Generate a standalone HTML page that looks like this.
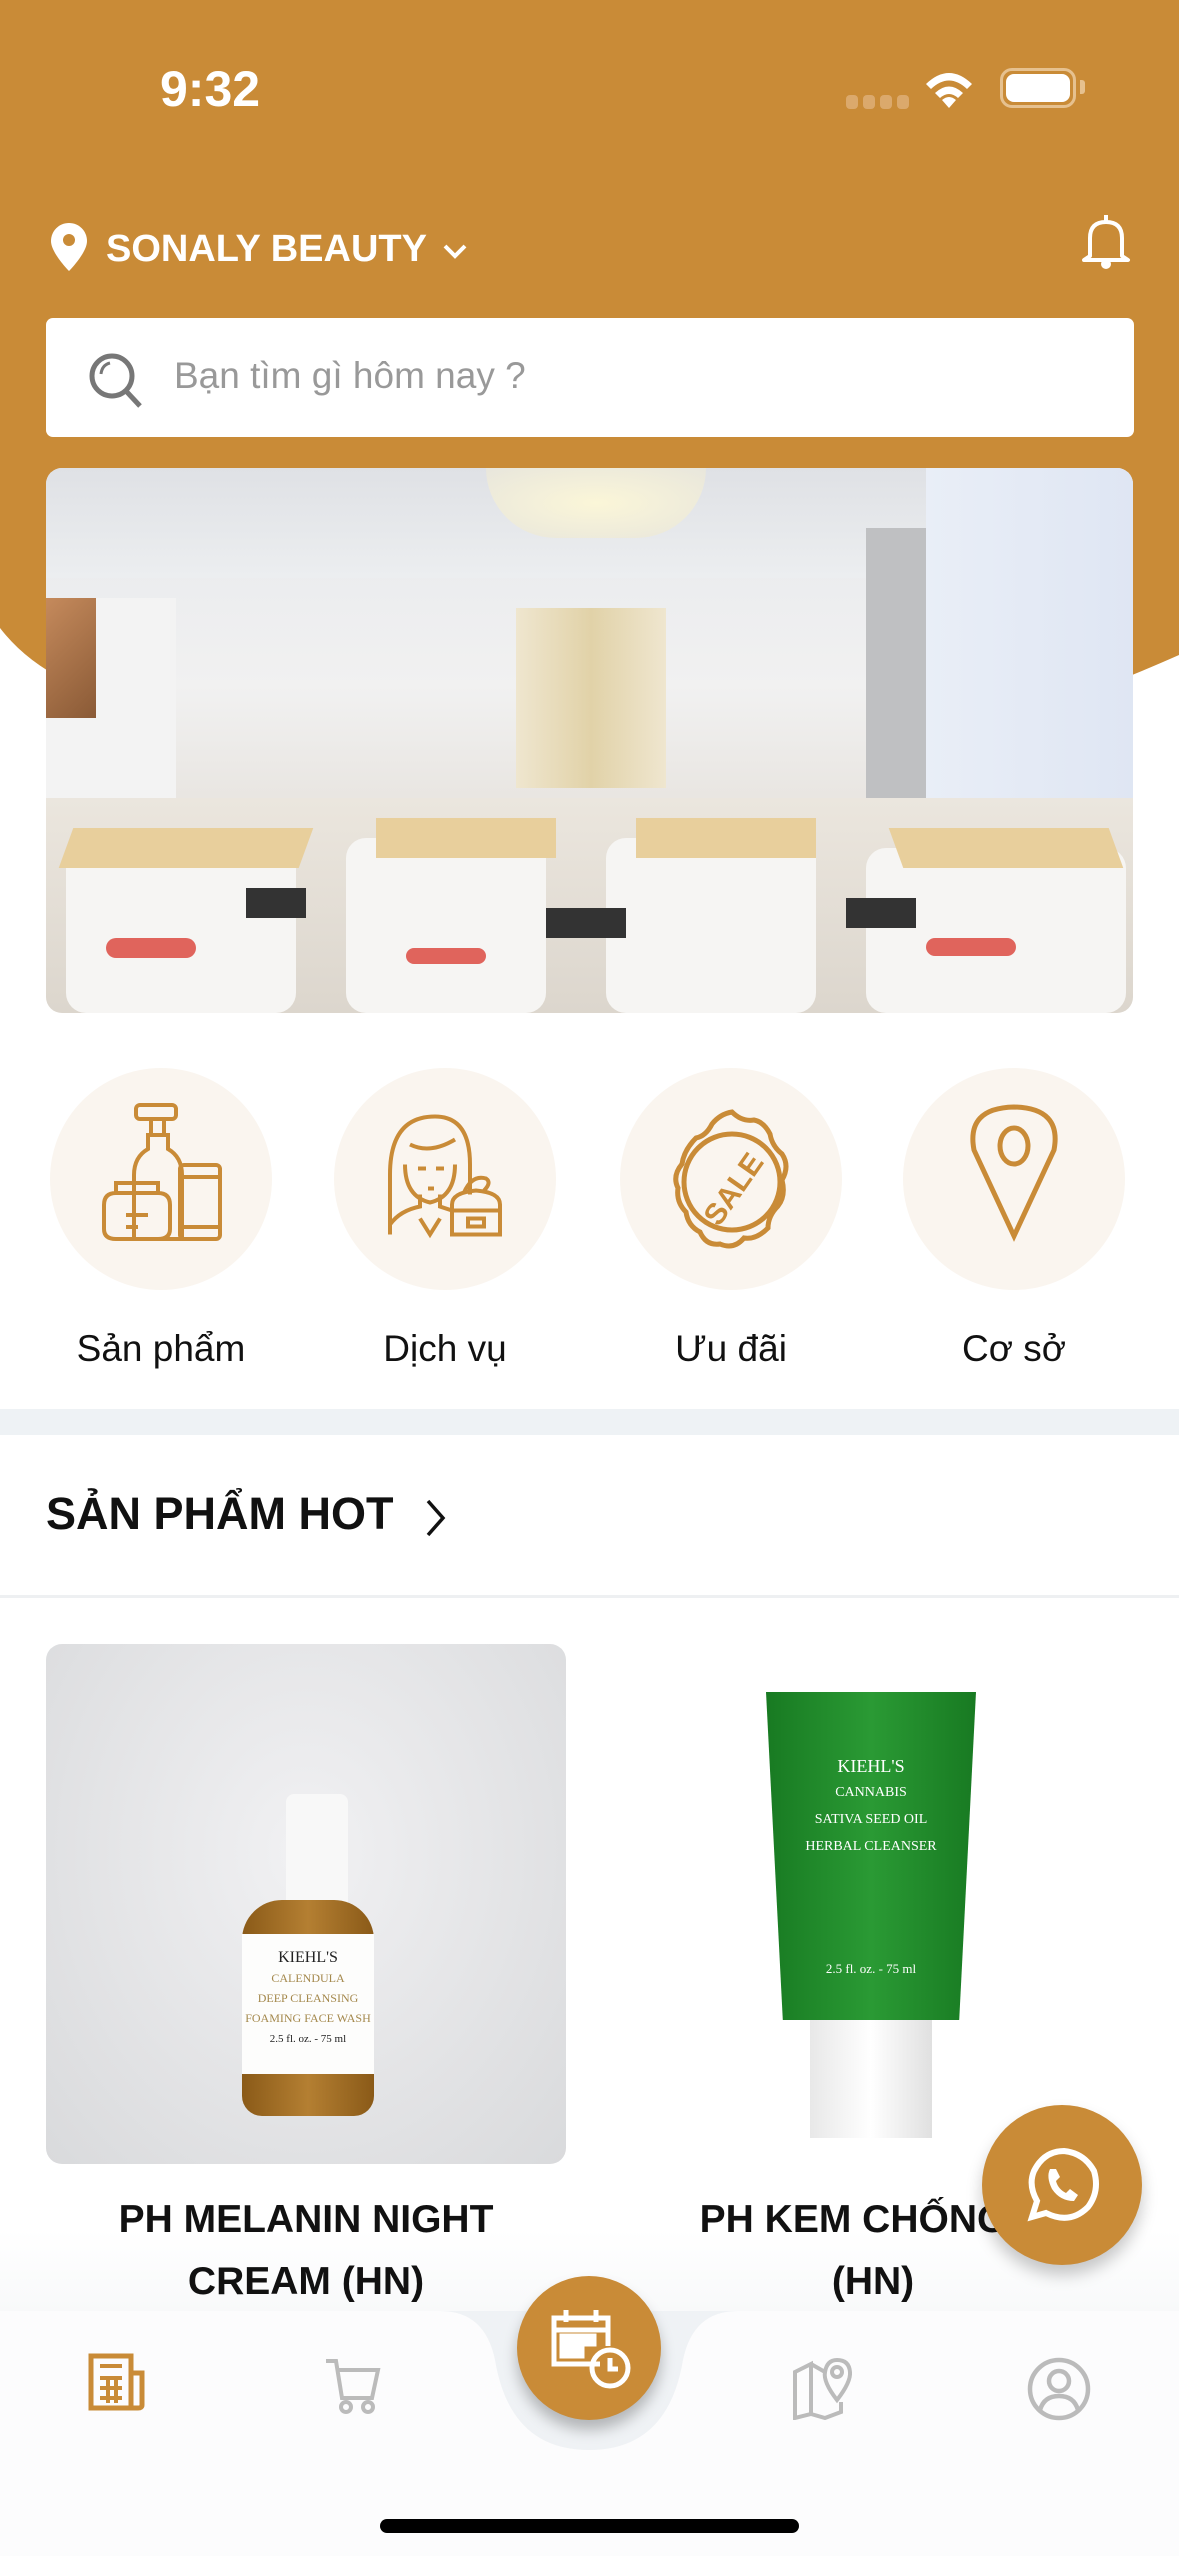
<!DOCTYPE html>
<html><head><meta charset="utf-8"><style>
*{margin:0;padding:0;box-sizing:border-box}
body{width:1179px;height:2556px;position:relative;background:#fff;font-family:"Liberation Sans","Noto Sans CJK SC",sans-serif;overflow:hidden}
.a{position:absolute}
.circ{position:absolute;width:222px;height:222px;border-radius:50%;background:#faf5ef;top:1068px}
.lbl{position:absolute;top:1322px;font-size:37px;color:#111;width:280px;text-align:center}
.ttl{position:absolute;font-weight:bold;font-size:39px;color:#111;text-align:center;width:560px;line-height:62px;top:2189px;z-index:2}
</style></head><body>
<!-- header -->
<svg class="a" style="left:0;top:0" width="1179" height="680"><path d="M0 0H1179V655Q1100 690 1060 700H120Q40 680 0 628Z" fill="#c98b37"/></svg>
<div class="a" style="left:160px;top:60px;font-size:50px;font-weight:bold;color:#fff">9:32</div>
<div class="a" style="left:846px;top:95px;width:64px;height:14px">
<span class="a" style="left:0;width:12px;height:14px;border-radius:4px;background:#dba96c"></span><span class="a" style="left:17px;width:12px;height:14px;border-radius:4px;background:#dba96c"></span><span class="a" style="left:34px;width:12px;height:14px;border-radius:4px;background:#dba96c"></span><span class="a" style="left:51px;width:12px;height:14px;border-radius:4px;background:#dba96c"></span></div>
<svg class="a" style="left:922px;top:66px" width="54" height="44" viewBox="0 0 54 44"><path d="M27 42L20 34Q27 28 34 34Z M13 27Q27 14 41 27L36 32Q27 24 18 32Z M4 18Q27 -4 50 18L45 23Q27 6 9 23Z" fill="#fff"/></svg>
<div class="a" style="left:1000px;top:68px;width:76px;height:40px;border:3px solid #e6c18f;border-radius:12px"><div class="a" style="left:3px;top:3px;width:64px;height:28px;background:#fff;border-radius:8px"></div></div>
<div class="a" style="left:1080px;top:80px;width:5px;height:14px;background:#e6c18f;border-radius:0 3px 3px 0"></div>
<svg class="a" style="left:50px;top:222px" width="38" height="50" viewBox="0 0 38 50"><path d="M19 1C9 1 1 9 1 19C1 31 19 49 19 49C19 49 37 31 37 19C37 9 29 1 19 1Z" fill="#fff"/><circle cx="19" cy="18" r="6" fill="#c98b37"/></svg>
<div class="a" style="left:106px;top:228px;font-size:38px;color:#fff;font-weight:bold">SONALY BEAUTY</div>
<svg class="a" style="left:442px;top:242px" width="26" height="18"><path d="M3 4L13 14L23 4" stroke="#fff" stroke-width="4" fill="none"/></svg>
<svg class="a" style="left:1080px;top:212px" width="52" height="58" viewBox="0 0 52 58"><path d="M26 3V9M10 44V26Q10 10 26 10Q42 10 42 26V44L48 48H4Z" stroke="#fff" stroke-width="4" fill="none" stroke-linejoin="round"/><circle cx="26" cy="52" r="5" fill="#fff"/></svg>
<div class="a" style="left:46px;top:318px;width:1088px;height:119px;background:#fff;border-radius:7px"></div>
<svg class="a" style="left:88px;top:352px" width="58" height="58" viewBox="0 0 58 58"><circle cx="24" cy="24" r="20" stroke="#777" stroke-width="5" fill="none"/><path d="M38 39L52 54" stroke="#777" stroke-width="5"/><path d="M13 22Q14 13 22 11" stroke="#777" stroke-width="3" fill="none"/></svg>
<div class="a" style="left:174px;top:355px;font-size:37px;color:#999">Bạn tìm gì hôm nay ?</div>
<!-- banner -->
<div class="a" style="left:46px;top:468px;width:1087px;height:545px;border-radius:16px;overflow:hidden;background:linear-gradient(#e6e8ec,#f1f1f1 40%,#e9e6e2 60%,#f3f3f3)">
<div class="a" style="left:0;top:0;width:1087px;height:110px;background:linear-gradient(#dfe1e5,#eceef0)"></div>
<div class="a" style="left:440px;top:0;width:220px;height:70px;border-radius:0 0 110px 110px;background:radial-gradient(#fbf6d8,#e8e6dc)"></div>
<div class="a" style="left:470px;top:140px;width:150px;height:180px;background:linear-gradient(90deg,#efe6cf,#e1d2a8,#efe6cf)"></div>
<div class="a" style="left:0;top:130px;width:130px;height:300px;background:#f3f3f3"></div>
<div class="a" style="left:0;top:130px;width:50px;height:120px;background:linear-gradient(135deg,#c58a5c,#8a5a36)"></div>
<div class="a" style="left:820px;top:60px;width:80px;height:320px;background:#bfc0c2"></div>
<div class="a" style="left:880px;top:0;width:207px;height:400px;background:linear-gradient(90deg,#e9eef7,#dfe6f3)"></div>
<div class="a" style="left:0;top:330px;width:1087px;height:215px;background:linear-gradient(#ebe6de,#dcd6cd)"></div>
<div class="a" style="left:20px;top:380px;width:230px;height:165px;background:#f6f5f3;border-radius:20px"></div>
<div class="a" style="left:300px;top:370px;width:200px;height:175px;background:#f6f5f3;border-radius:20px"></div>
<div class="a" style="left:560px;top:370px;width:210px;height:175px;background:#f6f5f3;border-radius:20px"></div>
<div class="a" style="left:820px;top:380px;width:260px;height:165px;background:#f6f5f3;border-radius:20px"></div>
<div class="a" style="left:20px;top:360px;width:240px;height:40px;background:#e8cf9c;transform:skewX(-20deg)"></div>
<div class="a" style="left:330px;top:350px;width:180px;height:40px;background:#e8cf9c"></div>
<div class="a" style="left:590px;top:350px;width:180px;height:40px;background:#e8cf9c"></div>
<div class="a" style="left:850px;top:360px;width:220px;height:40px;background:#e8cf9c;transform:skewX(20deg)"></div>
<div class="a" style="left:200px;top:420px;width:60px;height:30px;background:#333"></div>
<div class="a" style="left:500px;top:440px;width:80px;height:30px;background:#333"></div>
<div class="a" style="left:800px;top:430px;width:70px;height:30px;background:#333"></div>
<div class="a" style="left:60px;top:470px;width:90px;height:20px;background:#e0645c;border-radius:10px"></div>
<div class="a" style="left:360px;top:480px;width:80px;height:16px;background:#e0645c;border-radius:10px"></div>
<div class="a" style="left:880px;top:470px;width:90px;height:18px;background:#e0645c;border-radius:10px"></div>
</div>
<!-- categories -->
<div class="circ" style="left:50px"></div><div class="circ" style="left:334px"></div><div class="circ" style="left:620px"></div><div class="circ" style="left:903px"></div>
<svg class="a" style="left:96px;top:1100px" width="135" height="150" viewBox="0 0 135 140" fill="none" stroke="#c98b37" stroke-width="4"><rect x="40" y="0" width="40" height="14" rx="4"/><path d="M55 14V30H68V14M52 30H72V44Q86 52 86 70V134H38V70Q38 52 52 44Z"/><rect x="84" y="60" width="40" height="74" rx="4"/><path d="M84 72H124M84 122H124"/><path d="M8 100Q8 88 20 88H62Q74 88 74 100V124Q74 134 62 134H20Q8 134 8 124Z M20 88V78H62V88 M30 110H52M30 122H42"/></svg>
<svg class="a" style="left:380px;top:1112px" width="135" height="135" viewBox="0 0 135 130" fill="none" stroke="#c98b37" stroke-width="4"><path d="M10 120V60Q10 2 55 2Q90 2 90 50V80M30 30Q50 40 75 25M25 50Q25 82 50 88Q75 82 75 50M40 104L50 120L60 104M10 110Q20 96 40 92V80M60 80V92L72 96"/><path d="M72 120V90Q72 78 96 76Q120 78 120 90V120Z M72 96H120M88 104H104V112H88Z M84 78Q92 60 106 64Q112 68 104 76"/><path d="M38 54H46M56 54H64M48 74H54"/></svg>
<svg class="a" style="left:660px;top:1108px" width="145" height="150" viewBox="0 0 145 150" fill="none" stroke="#c98b37" stroke-width="5"><path d="M72 4Q82 14 94 12Q104 14 110 26Q112 38 122 46Q130 58 122 72Q126 88 118 98Q108 108 108 120Q96 132 84 130Q74 142 60 136Q46 138 40 124Q28 118 26 104Q16 94 18 80Q12 68 22 56Q24 42 36 30Q46 28 52 16Q60 6 72 4Z"/><circle cx="72" cy="74" r="48"/><text x="72" y="92" font-size="30" font-family="Liberation Sans" fill="#c98b37" stroke="none" font-weight="bold" text-anchor="middle" transform="rotate(-55 72 80)">SALE</text></svg>
<svg class="a" style="left:964px;top:1104px" width="100" height="140" viewBox="0 0 100 140" fill="none" stroke="#c98b37" stroke-width="5"><path d="M50 132L10 46Q2 4 50 3Q98 4 90 46Z"/><ellipse cx="50" cy="42" rx="14" ry="18"/></svg>
<div class="lbl" style="left:21px;top:1328px">Sản phẩm</div><div class="lbl" style="left:305px;top:1328px">Dịch vụ</div><div class="lbl" style="left:591px;top:1328px">Ưu đãi</div><div class="lbl" style="left:874px;top:1328px">Cơ sở</div>
<div class="a" style="left:0;top:1409px;width:1179px;height:26px;background:#eef2f5"></div>
<div class="a" style="left:46px;top:1488px;font-size:45px;font-weight:bold;color:#111">SẢN PHẨM HOT</div>
<svg class="a" style="left:424px;top:1498px" width="24" height="40"><path d="M4 3L19 20L4 37" stroke="#111" stroke-width="3.5" fill="none"/></svg>
<div class="a" style="left:0;top:1595px;width:1179px;height:3px;background:#eef0f2"></div>
<!-- products -->
<div class="a" style="left:46px;top:1644px;width:520px;height:520px;border-radius:16px;background:radial-gradient(ellipse at 50% 40%,#f1f1f3,#d9dadc)">
<div class="a" style="left:240px;top:150px;width:62px;height:110px;background:#f8f8f8;border-radius:8px 8px 0 0"></div>
<div class="a" style="left:196px;top:256px;width:132px;height:216px;background:linear-gradient(90deg,#8a5a18,#b47f32,#8a5a18);border-radius:40px 40px 20px 20px"></div>
<div class="a" style="left:196px;top:290px;width:132px;height:140px;background:#fdfdfc;font-family:'Liberation Serif';text-align:center;font-size:16px;color:#222;padding-top:14px;line-height:20px">KIEHL'S<br><span style="color:#a4884c;font-size:12px">CALENDULA<br>DEEP CLEANSING<br>FOAMING FACE WASH</span><br><span style="font-size:11px">2.5 fl. oz. - 75 ml</span></div>
</div>
<div class="a" style="left:613px;top:1644px;width:520px;height:520px;background:#fff">
<div class="a" style="left:153px;top:48px;width:210px;height:328px;background:linear-gradient(90deg,#187a22,#2a9a34,#187a22);clip-path:polygon(0 0,100% 0,92% 100%,8% 100%)"></div>
<div class="a" style="left:160px;top:110px;width:196px;text-align:center;font-family:'Liberation Serif';color:#fff;font-size:18px;line-height:24px">KIEHL'S<br><span style="font-size:14px">CANNABIS<br>SATIVA SEED OIL<br>HERBAL CLEANSER</span><br><br><br><br><br><span style="font-size:13px">2.5 fl. oz. - 75 ml</span></div>
<div class="a" style="left:197px;top:376px;width:122px;height:118px;background:linear-gradient(90deg,#e8e8e8,#fff,#e0e0e0)"></div>
</div>
<div class="a" style="left:0;top:2230px;width:1179px;height:82px;background:linear-gradient(rgba(255,255,255,0),rgba(243,245,247,.6))"></div>
<div class="ttl" style="left:26px">PH MELANIN NIGHT<br>CREAM (HN)</div>
<div class="ttl" style="left:593px">PH KEM CHỐNG N<br>(HN)</div>
<!-- bottom nav -->
<svg class="a" style="left:0;top:2300px;z-index:3" width="1179" height="256"><path d="M0 11H440Q485 11 495 60Q510 150 589 150Q668 150 683 60Q693 11 738 11H1179V256H0Z" fill="#fcfcfd"/><path d="M440 11Q485 11 495 60Q510 150 589 150Q668 150 683 60Q693 11 738 11Z" fill="#eff2f5"/></svg>
<div class="a" style="left:517px;top:2276px;width:144px;height:144px;border-radius:50%;background:#c98b37;box-shadow:0 10px 14px rgba(0,0,0,.25);z-index:4"></div>
<svg class="a" style="left:546px;top:2306px;z-index:5" width="90" height="90" viewBox="0 0 90 90" fill="none" stroke="#fff" stroke-width="5"><path d="M54 58H8V12H62V40M8 24H62M20 4V16M50 4V16"/><rect x="16" y="30" width="8" height="8" fill="#fff"/><rect x="28" y="30" width="8" height="8" fill="#fff"/><rect x="40" y="30" width="8" height="8" fill="#fff"/><rect x="16" y="42" width="8" height="8" fill="#fff"/><rect x="28" y="42" width="8" height="8" fill="#fff"/><circle cx="64" cy="62" r="18"/><path d="M64 52V63H72"/></svg>
<svg class="a" style="left:88px;top:2353px;z-index:5" width="58" height="58" viewBox="0 0 58 58" fill="none" stroke="#c98b37" stroke-width="5"><rect x="3" y="3" width="40" height="52"/><path d="M43 20H54V52Q54 55 50 55H43"/><path d="M12 13H34M12 25H34M12 35H34M12 45H34M20 25V50M28 25V50" stroke-width="4"/></svg>
<svg class="a" style="left:324px;top:2358px;z-index:5" width="60" height="56" viewBox="0 0 60 56" fill="none" stroke="#bbb" stroke-width="4"><path d="M2 3H12L18 40H48L54 12H14"/><circle cx="22" cy="49" r="5"/><circle cx="44" cy="49" r="5"/></svg>
<svg class="a" style="left:793px;top:2356px;z-index:5" width="62" height="64" viewBox="0 0 62 64" fill="none" stroke="#bbb" stroke-width="4"><path d="M2 16L18 8V58L2 62Z M18 8L32 16M18 58L32 62L48 56V46"/><path d="M44 44Q30 26 32 16Q34 4 44 4Q56 4 57 16Q58 26 44 44Z"/><circle cx="44" cy="16" r="5"/></svg>
<svg class="a" style="left:1026px;top:2356px;z-index:5" width="66" height="66" viewBox="0 0 66 66" fill="none" stroke="#bbb" stroke-width="4.5"><circle cx="33" cy="33" r="29"/><circle cx="33" cy="25" r="10"/><path d="M14 54Q18 40 33 40Q48 40 52 54"/></svg>
<!-- whatsapp -->
<div class="a" style="left:982px;top:2105px;width:160px;height:160px;border-radius:50%;background:#c98b37;box-shadow:0 10px 16px rgba(0,0,0,.22);z-index:6"></div>
<svg class="a" style="left:1022px;top:2145px;z-index:7" width="80" height="80" viewBox="0 0 80 80" fill="none" stroke="#fff" stroke-width="6"><path d="M10 72L15 56Q6 40 12 26Q22 6 42 6Q62 8 72 26Q78 46 66 62Q48 80 24 68Z"/><path d="M28 24Q24 32 30 44Q38 56 52 56L56 50L48 44L44 48Q36 44 34 36L38 32L34 24Z" fill="#fff" stroke="none"/></svg>
<div class="a" style="left:380px;top:2519px;width:419px;height:14px;border-radius:7px;background:#000;z-index:6"></div>
</body></html>
